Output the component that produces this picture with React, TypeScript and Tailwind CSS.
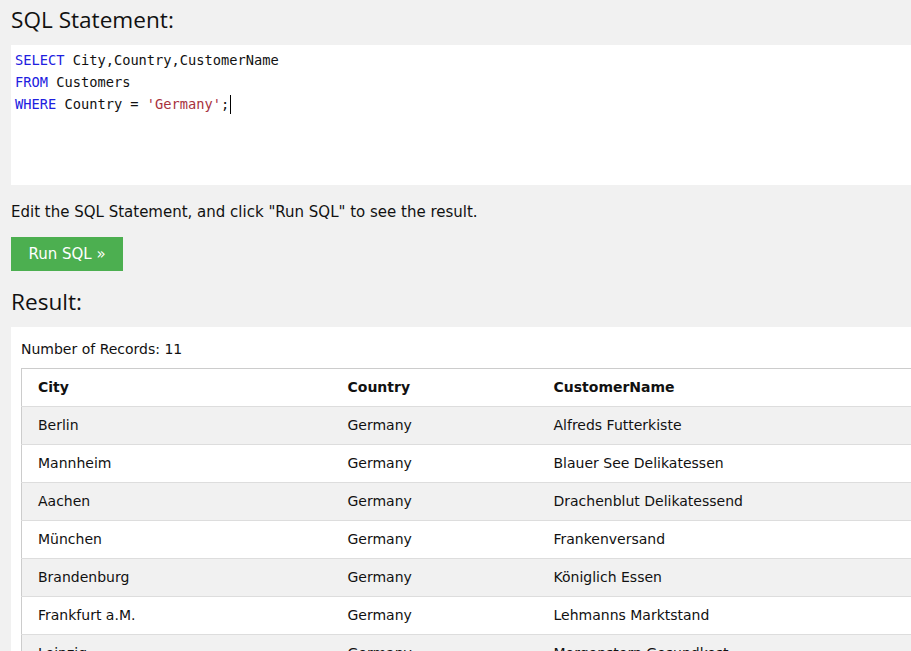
const rows = [
  ["Berlin", "Germany", "Alfreds Futterkiste"],
  ["Mannheim", "Germany", "Blauer See Delikatessen"],
  ["Aachen", "Germany", "Drachenblut Delikatessend"],
  ["München", "Germany", "Frankenversand"],
  ["Brandenburg", "Germany", "Königlich Essen"],
  ["Frankfurt a.M.", "Germany", "Lehmanns Marktstand"],
  ["Leipzig", "Germany", "Morgenstern Gesundkost"],
  ["Stuttgart", "Germany", "Die Wandernde Kuh"],
];

export default function App() {
  return (
    <div className="h-screen w-screen overflow-hidden bg-[#f1f1f1] text-black font-['DejaVu_Sans',Verdana,sans-serif]">
      <div className="pl-[11px]">
        {/* SQL statement */}
        <h2 className="pt-[4px] h-[45px] text-[22.6px] leading-[32px] font-['Open_Sans',sans-serif] text-[#111]">
          SQL Statement:
        </h2>
        <div className="h-[140px] bg-white pl-[4px] pt-[4px] font-['DejaVu_Sans_Mono',monospace] text-[13.7px] leading-[22px] text-[#111]">
          <div>
            <span className="text-[#2020e0]">SELECT</span> City,Country,CustomerName
          </div>
          <div>
            <span className="text-[#2020e0]">FROM</span> Customers
          </div>
          <div className="flex items-center">
            <span className="text-[#2020e0]">WHERE</span>&nbsp;Country =&nbsp;
            <span className="text-[#a8323e]">'Germany'</span>;
            <span className="ml-[1px] inline-block w-[1px] h-[19px] bg-black" />
          </div>
        </div>

        <p className="mt-[17px] text-[15px] leading-[20px] text-[#111]">
          Edit the SQL Statement, and click "Run SQL" to see the result.
        </p>
        <button className="mt-[15px] h-[34px] w-[112px] bg-[#4caf50] text-white text-[15px] font-['DejaVu_Sans',sans-serif]">
          Run SQL »
        </button>

        <h2 className="mt-[15px] h-[41px] text-[22.6px] leading-[32px] font-['Open_Sans',sans-serif] text-[#111]">
          Result:
        </h2>

        {/* Result */}
        <div className="bg-white pl-[10px] pt-[12px] pb-4">
          <div className="text-[14px] leading-[20px] text-[#111] mb-[9px]">Number of Records: 11</div>
          <table className="w-[1000px] border-collapse border border-[#ccc] text-[14px] text-[#111]">
            <thead>
              <tr className="h-[38px] border-b border-[#ddd]">
                <th className="w-[309px] pl-[16px] text-left font-bold">City</th>
                <th className="w-[206px] pl-[17px] text-left font-bold">Country</th>
                <th className="pl-[17px] text-left font-bold">CustomerName</th>
              </tr>
            </thead>
            <tbody>
              {rows.map((r, i) => (
                <tr
                  key={r[2]}
                  className={`h-[38px] border-b border-[#ddd] ${i % 2 === 0 ? "bg-[#f1f1f1]" : "bg-white"}`}
                >
                  <td className="pl-[16px]">{r[0]}</td>
                  <td className="pl-[17px]">{r[1]}</td>
                  <td className="pl-[17px]">{r[2]}</td>
                </tr>
              ))}
            </tbody>
          </table>
        </div>
      </div>
    </div>
  );
}
